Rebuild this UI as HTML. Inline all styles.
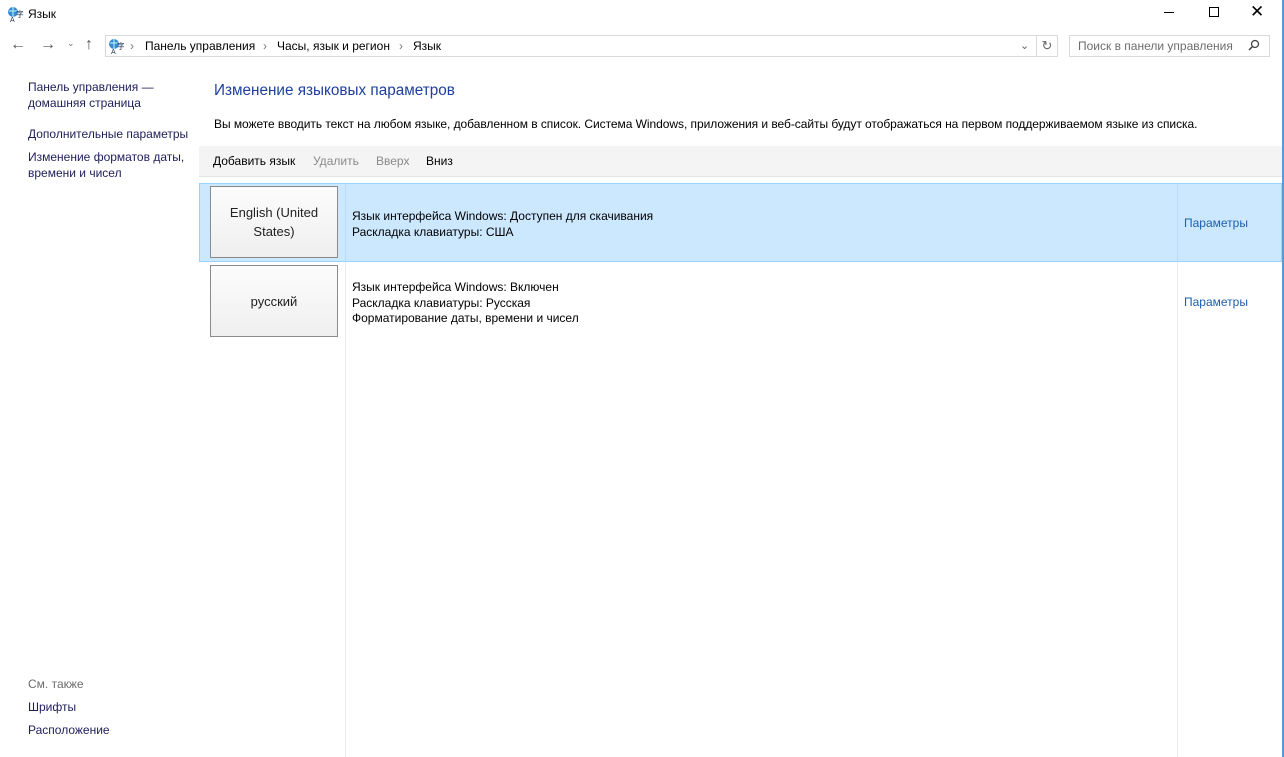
<!DOCTYPE html>
<html><head><meta charset="utf-8"><style>
*{margin:0;padding:0;box-sizing:border-box}
body{width:1284px;height:757px;background:#fff;font-family:"Liberation Sans",sans-serif;font-size:12px;color:#000;position:relative;overflow:hidden}
.a{position:absolute;white-space:nowrap}
.nav{color:#1e1e5a}
.link{color:#1c5fb0}
.vl{position:absolute;width:1px;background:#ececec}
.btn{position:absolute;left:210px;width:128px;border:1px solid #8a8a8a;background:linear-gradient(#fcfcfc,#efefef);text-align:center;font-size:13px;color:#222;display:flex;align-items:center;justify-content:center;line-height:19px}
</style></head><body>
<svg class="a" style="left:7px;top:6px" width="16" height="16" viewBox="0 0 16 16"><circle cx="6" cy="6" r="5" fill="#3a8ad6"/><path d="M2 5h8M6 1v10" stroke="#bfe" stroke-width="1"/><text x="9" y="11" font-size="8" fill="#235">字</text><text x="3" y="16" font-size="7" fill="#235">A</text></svg>
<div class="a" style="left:28px;top:7px">Язык</div>
<div class="a" style="left:1164px;top:12px;width:10px;height:1px;background:#000"></div>
<div class="a" style="left:1209px;top:7px;width:10px;height:10px;border:1px solid #000"></div>
<div class="a" style="left:1250px;top:2px;font-size:17px">✕</div>
<div class="a" style="left:10px;top:36px;font-size:16px;color:#555">←</div>
<div class="a" style="left:40px;top:36px;font-size:16px;color:#555">→</div>
<div class="a" style="left:67px;top:38px;font-size:9px;color:#777">⌄</div>
<div class="a" style="left:85px;top:36px;font-size:16px;color:#555">↑</div>
<div class="a" style="left:105px;top:35px;width:932px;height:22px;border:1px solid #d9d9d9"></div>
<div class="a" style="left:1036px;top:35px;width:22px;height:22px;border:1px solid #d9d9d9;text-align:center;line-height:20px;color:#666;font-size:13px">↻</div>
<div class="a" style="left:1020px;top:39px;color:#666;font-size:11px">⌄</div>
<svg class="a" style="left:108px;top:38px" width="16" height="16" viewBox="0 0 16 16"><circle cx="6" cy="6" r="5" fill="#3a8ad6"/><path d="M2 5h8M6 1v10" stroke="#bfe" stroke-width="1"/><text x="9" y="11" font-size="8" fill="#235">字</text><text x="3" y="16" font-size="7" fill="#235">A</text></svg>
<div class="a" style="left:130px;top:39px;color:#777">›</div>
<div class="a" style="left:145px;top:39px">Панель управления</div>
<div class="a" style="left:263px;top:39px;color:#777">›</div>
<div class="a" style="left:277px;top:39px">Часы, язык и регион</div>
<div class="a" style="left:399px;top:39px;color:#777">›</div>
<div class="a" style="left:413px;top:39px">Язык</div>
<div class="a" style="left:1069px;top:35px;width:201px;height:22px;border:1px solid #d9d9d9"></div>
<div class="a" style="left:1078px;top:39px;color:#6d6d6d">Поиск в панели управления</div>
<svg class="a" style="left:1248px;top:39px" width="12" height="12"><circle cx="7" cy="5" r="3.5" fill="none" stroke="#444" stroke-width="1.3"/><path d="M4.5 7.5L1 11" stroke="#444" stroke-width="1.5"/></svg>
<div class="a nav" style="left:28px;top:79px;line-height:16px">Панель управления —<br>домашняя страница</div>
<div class="a nav" style="left:28px;top:127px">Дополнительные параметры</div>
<div class="a nav" style="left:28px;top:149px;line-height:16px">Изменение форматов даты,<br>времени и чисел</div>
<div class="a" style="left:28px;top:677px;color:#6d6d6d">См. также</div>
<div class="a nav" style="left:28px;top:700px">Шрифты</div>
<div class="a nav" style="left:28px;top:723px">Расположение</div>
<div class="a" style="left:214px;top:82px;font-size:15.3px;color:#1e3f9c">Изменение языковых параметров</div>
<div class="a" style="left:214px;top:117px;letter-spacing:-0.05px">Вы можете вводить текст на любом языке, добавленном в список. Система Windows, приложения и веб-сайты будут отображаться на первом поддерживаемом языке из списка.</div>
<div class="a" style="left:199px;top:146px;width:1083px;height:31px;background:#f4f4f4;border-bottom:1px solid #e4e4e4"></div>
<div class="a" style="left:213px;top:154px">Добавить язык</div>
<div class="a" style="left:313px;top:154px;color:#8a8a8a">Удалить</div>
<div class="a" style="left:376px;top:154px;color:#8a8a8a">Вверх</div>
<div class="a" style="left:426px;top:154px">Вниз</div>
<div class="vl" style="left:345px;top:261px;height:496px"></div>
<div class="vl" style="left:1177px;top:261px;height:496px"></div>
<div class="a" style="left:199px;top:183px;width:1083px;height:79px;background:#cce8ff;border:1px solid #99d1ff"></div>
<div class="vl" style="left:345px;top:184px;height:77px;background:#b4dcfb"></div>
<div class="vl" style="left:1177px;top:184px;height:77px;background:#b4dcfb"></div>
<div class="btn" style="top:186px;height:72px">English (United<br>States)</div>
<div class="btn" style="top:265px;height:72px">русский</div>
<div class="a" style="left:352px;top:208px;line-height:16px">Язык интерфейса Windows: Доступен для скачивания<br>Раскладка клавиатуры: США</div>
<div class="a" style="left:352px;top:280px;line-height:15.5px">Язык интерфейса Windows: Включен<br>Раскладка клавиатуры: Русская<br>Форматирование даты, времени и чисел</div>
<div class="a link" style="left:1184px;top:216px">Параметры</div>
<div class="a link" style="left:1184px;top:295px">Параметры</div>
<div class="a" style="left:1282px;top:0;width:2px;height:757px;background:#5b9bd5"></div>
</body></html>
